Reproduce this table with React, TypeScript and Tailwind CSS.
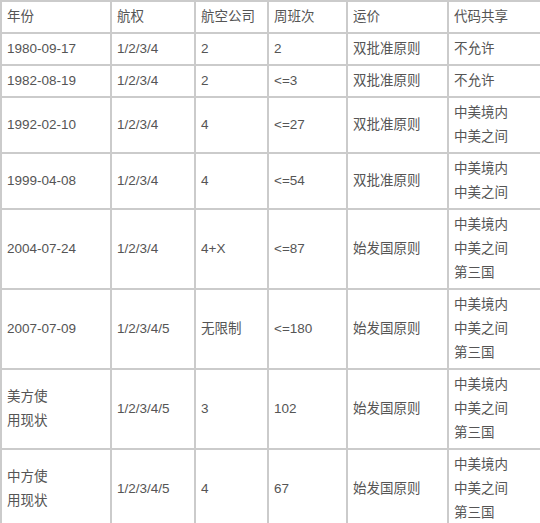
import React from 'react';

type Row = {
  year: string[];
  rights: string;
  airlines: string;
  weekly: string;
  price: string;
  codeshare: string[];
};

const rows: Row[] = [
  { year: ['1980-09-17'], rights: '1/2/3/4', airlines: '2', weekly: '2', price: '双批准原则', codeshare: ['不允许'] },
  { year: ['1982-08-19'], rights: '1/2/3/4', airlines: '2', weekly: '<=3', price: '双批准原则', codeshare: ['不允许'] },
  { year: ['1992-02-10'], rights: '1/2/3/4', airlines: '4', weekly: '<=27', price: '双批准原则', codeshare: ['中美境内', '中美之间'] },
  { year: ['1999-04-08'], rights: '1/2/3/4', airlines: '4', weekly: '<=54', price: '双批准原则', codeshare: ['中美境内', '中美之间'] },
  { year: ['2004-07-24'], rights: '1/2/3/4', airlines: '4+X', weekly: '<=87', price: '始发国原则', codeshare: ['中美境内', '中美之间', '第三国'] },
  { year: ['2007-07-09'], rights: '1/2/3/4/5', airlines: '无限制', weekly: '<=180', price: '始发国原则', codeshare: ['中美境内', '中美之间', '第三国'] },
  { year: ['美方使', '用现状'], rights: '1/2/3/4/5', airlines: '3', weekly: '102', price: '始发国原则', codeshare: ['中美境内', '中美之间', '第三国'] },
  { year: ['中方使', '用现状'], rights: '1/2/3/4/5', airlines: '4', weekly: '67', price: '始发国原则', codeshare: ['中美境内', '中美之间', '第三国'] },
];

const headers = ['年份', '航权', '航空公司', '周班次', '运价', '代码共享'];

const cell = 'border-2 border-[#cbcbcb] px-[5px] py-[3px] align-middle';

const Lines = ({ items }: { items: string[] }) => (
  <>
    {items.map((t, i) => (
      <div key={i}>{t}</div>
    ))}
  </>
);

export default function App() {
  return (
    <div className="w-[540px] bg-white">
      <table
        className="table-fixed border-collapse w-[540px] text-[13.5px] leading-[24px] text-[#555555]"
        style={{ fontFamily: '"Liberation Sans", Arial, "Noto Sans CJK SC", sans-serif' }}
      >
        <colgroup>
          <col className="w-[110px]" />
          <col className="w-[84px]" />
          <col className="w-[73px]" />
          <col className="w-[79px]" />
          <col className="w-[101px]" />
          <col className="w-[93px]" />
        </colgroup>
        <thead>
          <tr>
            {headers.map((h) => (
              <th key={h} className={`${cell} text-left font-normal`}>
                {h}
              </th>
            ))}
          </tr>
        </thead>
        <tbody>
          {rows.map((r, i) => (
            <tr key={i}>
              <td className={cell}>
                <Lines items={r.year} />
              </td>
              <td className={cell}>{r.rights}</td>
              <td className={cell}>{r.airlines}</td>
              <td className={cell}>{r.weekly}</td>
              <td className={cell}>{r.price}</td>
              <td className={cell}>
                <Lines items={r.codeshare} />
              </td>
            </tr>
          ))}
        </tbody>
      </table>
    </div>
  );
}
